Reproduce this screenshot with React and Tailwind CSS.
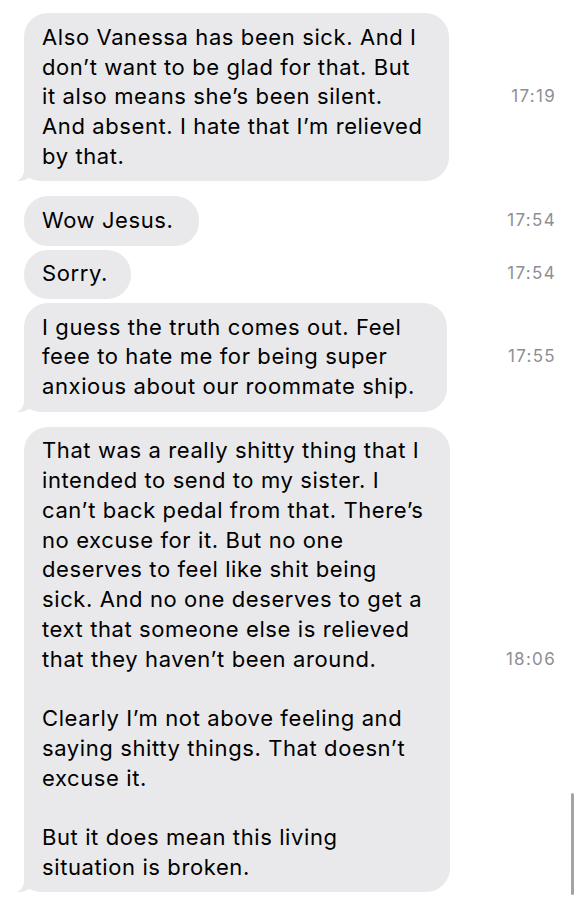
import React from 'react';

const messages = [
  {
    time: '17:19',
    width: 'w-[425px]',
    tail: true,
    gap: 'mt-0',
    lines: [
      'Also Vanessa has been sick. And I',
      'don\u2019t want to be glad for that. But',
      'it also means she\u2019s been silent.',
      'And absent. I hate that I\u2019m relieved',
      'by that.',
    ],
  },
  { time: '17:54', width: 'w-[175px]', gap: 'mt-[15px]', lines: ['Wow Jesus.'] },
  { time: '17:54', width: 'w-[107px]', gap: 'mt-[4px]', lines: ['Sorry.'] },
  {
    time: '17:55',
    width: 'w-[423px]',
    tail: true,
    gap: 'mt-[4px]',
    lines: [
      'I guess the truth comes out. Feel',
      'feee to hate me for being super',
      'anxious about our roommate ship.',
    ],
  },
  {
    time: '18:06',
    width: 'w-[426px]',
    tail: true,
    gap: 'mt-[15px]',
    lines: [
      'That was a really shitty thing that I',
      'intended to send to my sister. I',
      'can\u2019t back pedal from that. There\u2019s',
      'no excuse for it. But no one',
      'deserves to feel like shit being',
      'sick. And no one deserves to get a',
      'text that someone else is relieved',
      'that they haven\u2019t been around.',
      '',
      'Clearly I\u2019m not above feeling and',
      'saying shitty things. That doesn\u2019t',
      'excuse it.',
      '',
      'But it does mean this living',
      'situation is broken.',
    ],
  },
];

// little curl at the bottom-left of the last bubble in a group
const Tail = () => (
  <svg
    className="absolute left-[-8px] bottom-0"
    width="34"
    height="22"
    viewBox="0 0 34 22"
  >
    <path
      d="M8 0 L8 11 C8 16 5.5 20 0.5 22 C5.5 22.6 10 21 13.5 18.8 C17 21 21 22 27 22 L34 22 L34 0 Z"
      fill="#e9e9eb"
    />
  </svg>
);

const Bubble = ({ msg }) => (
  <div className={`flex items-center ${msg.gap}`}>
    <div
      className={`relative ${msg.width} rounded-[24px] bg-[#e9e9eb] px-[18px] py-[9.75px] text-[22px] leading-[29.75px] tracking-[0.6px] text-black`}
    >
      {msg.tail && <Tail />}
      <div className="relative">
        {msg.lines.map((line, i) => (
          <div key={i} className="whitespace-nowrap">
            {line || '\u00a0'}
          </div>
        ))}
      </div>
    </div>
    <div className="ml-auto pr-[24px] text-[17px] tracking-[1.3px] text-[#8e8e93]">
      {msg.time}
    </div>
  </div>
);

const App = () => {
  return (
    <div
      className="relative w-[580px] h-[901px] overflow-hidden bg-white pt-[13px] pl-[24px]"
      style={{ fontFamily: 'Inter, "Noto Sans", sans-serif' }}
    >
      {messages.map((msg, i) => (
        <Bubble key={i} msg={msg} />
      ))}

      {/* scroll indicator */}
      <div className="absolute left-[571px] top-[793px] h-[102px] w-[3px] rounded-full bg-[#a3a3a6]" />
    </div>
  );
};

export default App;
